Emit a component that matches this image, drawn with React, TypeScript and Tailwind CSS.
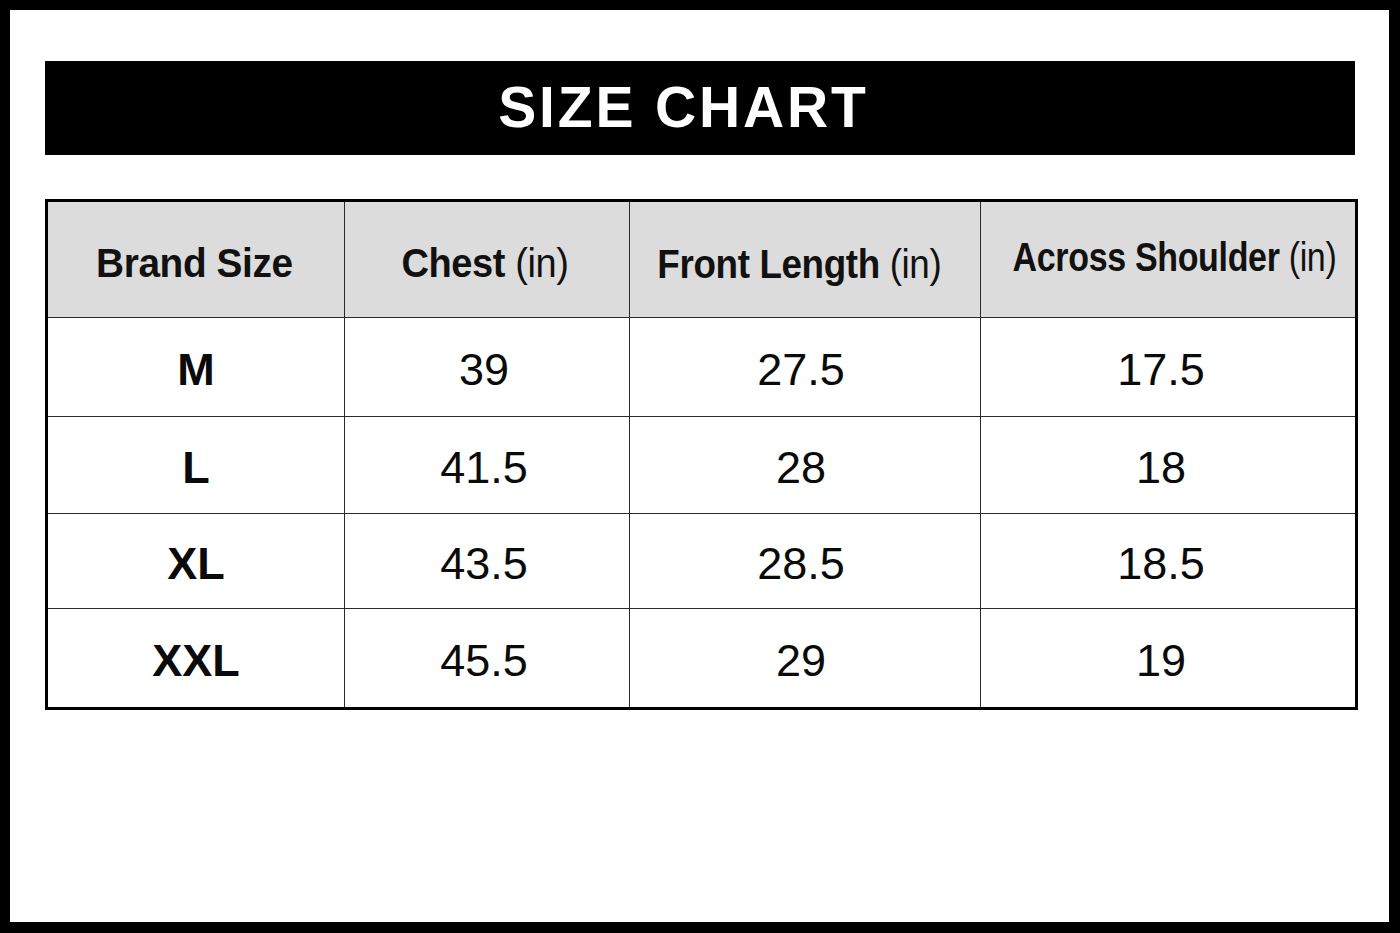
const rows = [
  { size: "M", chest: "39", length: "27.5", shoulder: "17.5", h: "h-[99px]" },
  { size: "L", chest: "41.5", length: "28", shoulder: "18", h: "h-[97px]" },
  { size: "XL", chest: "43.5", length: "28.5", shoulder: "18.5", h: "h-[95px]" },
  { size: "XXL", chest: "45.5", length: "29", shoulder: "19", h: "h-[100px]" },
]

// headings are a condensed face in the chart; Arial squeezed per column
function HeadCell({ label, unit, squeeze }: { label: string; unit?: boolean; squeeze: string }) {
  return (
    <th className="border-[1.5px] border-[#2a2a2a] bg-[#dcdcdc] p-0 align-middle">
      <div className="flex justify-center">
        <span className={`inline-block whitespace-nowrap text-[40px] font-bold tracking-[-0.01em] text-[#111] ${squeeze}`}>
          {label}
          {unit && <span className="font-normal"> (in)</span>}
        </span>
      </div>
    </th>
  )
}

export default function App() {
  return (
    <div className="h-[933px] w-[1400px] border-t-[10px] border-r-[11px] border-b-[11px] border-l-[10px] border-black bg-white font-['Liberation_Sans',Arial,sans-serif]">
      <div className="flex flex-col pt-[51px] pl-[35px] pr-[34px]">
        <div className="flex h-[94px] items-center justify-center bg-black pr-[33px]">
          <h1 className="text-[57px] font-bold tracking-[0.05em] text-white">SIZE CHART</h1>
        </div>
        <table className="mt-[44px] w-[1310px] table-fixed border-collapse border-[3px] border-black">
          <colgroup>
            <col className="w-[298px]" />
            <col className="w-[285px]" />
            <col className="w-[351px]" />
            <col className="w-[376px]" />
          </colgroup>
          <thead>
            <tr className="h-[117px]">
              <HeadCell label="Brand Size" squeeze="scale-x-[0.97] -translate-x-[2px] translate-y-[3px]" />
              <HeadCell label="Chest" unit squeeze="scale-x-[0.95] -translate-x-[2px] translate-y-[3px]" />
              <HeadCell label="Front Length" unit squeeze="scale-x-[0.92] -translate-x-[6px] translate-y-[4px]" />
              <HeadCell label="Across Shoulder" unit squeeze="scale-x-[0.85] -translate-y-[3px] translate-x-[6px]" />
            </tr>
          </thead>
          <tbody>
            {rows.map((r) => (
              <tr key={r.size} className={`${r.h} text-center text-[45px] text-[#0a0a0a]`}>
                <td className="border-[1.5px] border-[#2a2a2a] pt-[6px] font-bold">{r.size}</td>
                <td className="border-[1.5px] border-[#2a2a2a] pt-[6px] pr-[6px]">{r.chest}</td>
                <td className="border-[1.5px] border-[#2a2a2a] pt-[6px] pr-[8px]">{r.length}</td>
                <td className="border-[1.5px] border-[#2a2a2a] pt-[6px] pr-[14px]">{r.shoulder}</td>
              </tr>
            ))}
          </tbody>
        </table>
      </div>
    </div>
  )
}
